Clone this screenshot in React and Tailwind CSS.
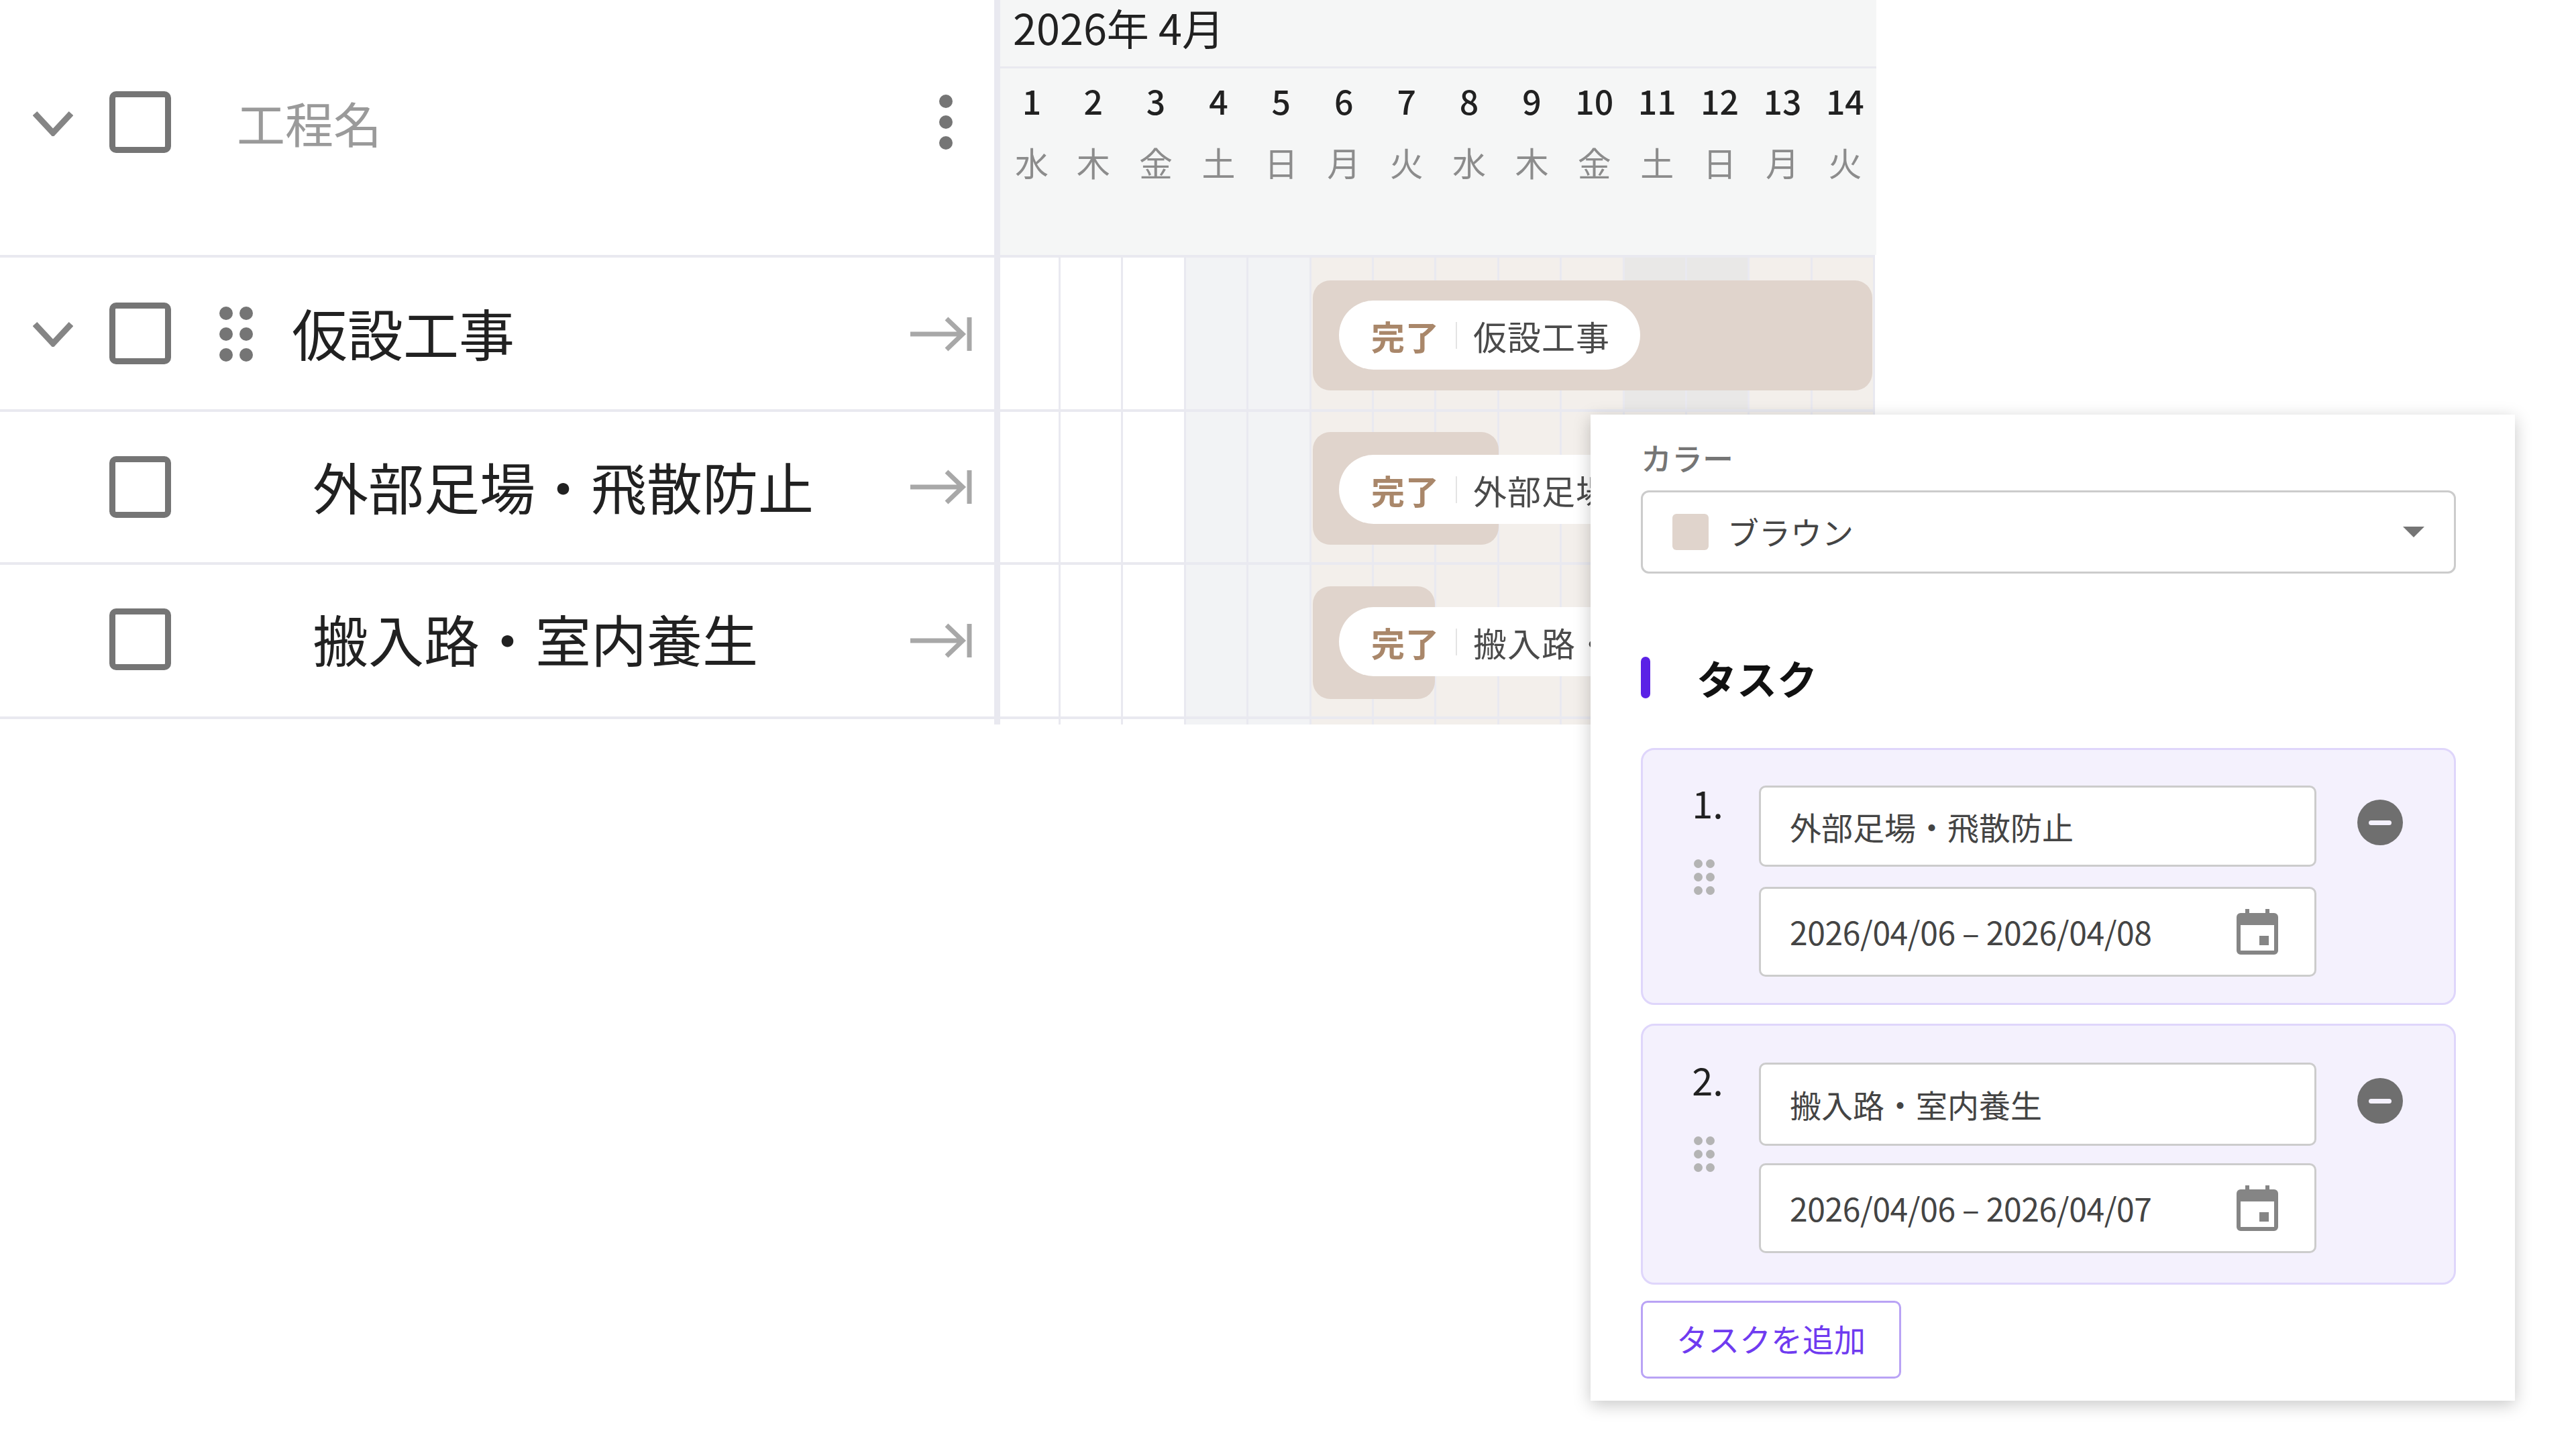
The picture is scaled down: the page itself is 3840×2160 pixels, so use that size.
const FONT = "font-['Noto_Sans_CJK_JP','Noto_Sans',sans-serif]";

const days = [
  [1, '水'], [2, '木'], [3, '金'], [4, '土'], [5, '日'], [6, '月'], [7, '火'],
  [8, '水'], [9, '木'], [10, '金'], [11, '土'], [12, '日'], [13, '月'], [14, '火'],
];

function Checkbox({ className = '' }) {
  return <div className={`w-[92px] h-[92px] border-[9px] border-[#757575] rounded-[10px] bg-white shrink-0 ${className}`} />;
}

function Chevron() {
  return (
    <svg viewBox="0 0 60 38" className="w-[60px] h-[38px]" fill="none" stroke="#858585" strokeWidth="9">
      <path d="M3 4 L30 33 L57 4" />
    </svg>
  );
}

function Dots({ size }) {
  const cls = size === 'lg' ? 'w-[20px] h-[20px] bg-[#757575]' : 'w-[13px] h-[13px] bg-[#b4b4b4]';
  return (
    <div className={size === 'lg' ? 'grid grid-cols-2 gap-x-[10px] gap-y-[11px]' : 'grid grid-cols-2 gap-x-[5px] gap-y-[7px]'}>
      {[0, 1, 2, 3, 4, 5].map((i) => (
        <span key={i} className={`${cls} rounded-full`} />
      ))}
    </div>
  );
}

function JumpIcon({ className }) {
  return (
    <svg viewBox="0 0 92 54" className={`absolute left-[1357px] w-[92px] h-[54px] ${className}`} fill="none" stroke="#a8a8a8" strokeWidth="7">
      <path d="M0 27 H76 M54 4 L78 27 L54 50" />
      <path d="M88 2 V52" />
    </svg>
  );
}

function CalendarIcon() {
  return (
    <svg viewBox="0 0 62 68" className="w-[62px] h-[68px]" fill="#858585">
      <path d="M13 0h6v6h24V0h6v6h7a6 6 0 0 1 6 6v50a6 6 0 0 1-6 6H6a6 6 0 0 1-6-6V12a6 6 0 0 1 6-6h7zM6 24v38h50V24z" />
      <rect x="34" y="40" width="14" height="14" />
    </svg>
  );
}

function MinusIcon() {
  return (
    <div className="w-[68px] h-[68px] rounded-full bg-[#6f6f6f] flex items-center justify-center">
      <span className="w-[34px] h-[7px] rounded-full bg-[#f4f1fd]" />
    </div>
  );
}

function LeftCell({ children }) {
  return (
    <div className="w-[1482px] shrink-0 flex items-center relative">
      {children}
    </div>
  );
}

function cellColor(i, tint) {
  if (i < 3) return 'bg-white';
  if (i < 5) return 'bg-[#f2f3f5]';
  if (tint && (i === 10 || i === 11)) return 'bg-[#e9e8e7]';
  return 'bg-[#f3efeb]';
}

function GanttRow({ barWidth, barTop, barHeight, pillTop, label, tint }) {
  return (
    <div className="relative flex-1 h-full">
      <div className="grid grid-cols-[90px_repeat(13,93.4px)] h-full">
        {days.map(([d], i) => (
          <div key={d} className={`h-full border-r-[3px] border-[#e9e9f0] ${cellColor(i, tint)}`} />
        ))}
      </div>
      {barWidth ? (
        <>
          <div
            className="absolute left-[466px] bg-[#e0d4cc] rounded-[26px]"
            style={{ width: barWidth, top: barTop, height: barHeight }}
          />
          <div
            className="absolute left-[505px] h-[103px] w-[449px] rounded-full bg-white flex items-center pl-[48px] whitespace-nowrap overflow-hidden"
            style={{ top: pillTop }}
          >
            <span className="text-[50px] leading-none font-bold text-[#a9876a] tracking-[1px]">完了</span>
            <span className="w-[2px] h-[40px] bg-[#e4e4e4] mx-[24px] shrink-0" />
            <span className="text-[50px] leading-none text-[#4a4a4a] tracking-[1px]">{label}</span>
          </div>
        </>
      ) : null}
    </div>
  );
}

function TaskCard({ n, name, range, cardH, inH1, inH2, gap, top, minusTop, dotsTop, mt }) {
  return (
    <div
      className={`relative border-[3px] border-[#dfd6fb] bg-[#f4f1fd] rounded-[20px] flex ${mt}`}
      style={{ height: cardH, paddingTop: top }}
    >
      <div className="w-[173px] shrink-0 flex flex-col items-center pl-[10px]">
        <span className="text-[56px] leading-[64px] text-[#212121] pl-[10px] mt-[-7px]">{n}.</span>
        <div style={{ marginTop: dotsTop }}>
          <Dots size="sm" />
        </div>
      </div>
      <div className="w-[831px] flex flex-col" style={{ gap }}>
        <div className="border-[3px] border-[#cccccc] rounded-[10px] bg-white flex items-center pl-[43px] pb-[1px] text-[47px] text-[#444] leading-none" style={{ height: inH1 }}>
          {name}
        </div>
        <div className="border-[3px] border-[#cccccc] rounded-[10px] bg-white flex items-center justify-between pl-[43px] pr-[54px] text-[48px] text-[#444] leading-none tracking-[-0.4px]" style={{ height: inH2 }}>
          <span className="pb-[2px]">{range}</span>
          <CalendarIcon />
        </div>
      </div>
      <div className="ml-[61px]" style={{ marginTop: minusTop }}>
        <MinusIcon />
      </div>
    </div>
  );
}

export default function App() {
  return (
    <div className={`relative w-[3840px] h-[2160px] bg-white overflow-hidden ${FONT}`}>
      <div className="w-[2795px]">
        {/* Header */}
        <div className="flex h-[384px] border-b-[4px] border-[#e9e9f0]">
          <LeftCell>
            <div className="w-[163px] flex justify-center pr-[6px] mt-[-12px]">
              <Chevron />
            </div>
            <Checkbox className="mt-[-16px]" />
            <span className="ml-[98px] text-[72px] leading-none text-[#9a9a9a] mt-[-16px]">工程名</span>
            <div className="absolute left-[1400px] top-[141px] flex flex-col gap-[11px]">
              <span className="w-[20px] h-[20px] rounded-full bg-[#757575]" />
              <span className="w-[20px] h-[20px] rounded-full bg-[#757575]" />
              <span className="w-[20px] h-[20px] rounded-full bg-[#757575]" />
            </div>
          </LeftCell>
          <div className="flex-1 bg-[#f5f6f6] border-l-[9px] border-[#e9e9f0] flex flex-col">
            <div className="h-[102px] border-b-[3px] border-[#e9e9f0] flex items-center pl-[19px] pb-[20px] text-[63px] leading-none text-[#212121]">
              2026年 4月
            </div>
            <div className="grid grid-cols-[90px_repeat(13,93.4px)] pt-[18px] pl-[2px]">
              {days.map(([d, w]) => (
                <div key={d} className="flex flex-col items-center">
                  <span className="text-[50px] leading-[58px] font-medium text-[#212121]">{d}</span>
                  <span className="text-[50px] leading-[58px] mt-[34px] text-[#8c8c8c]">{w}</span>
                </div>
              ))}
            </div>
          </div>
        </div>

        {/* Rows */}
        <div className="flex h-[230px] border-b-[4px] border-[#e9e9f0]">
          <LeftCell>
            <div className="w-[163px] flex justify-center pr-[6px] pt-[2px]"><Chevron /></div>
            <Checkbox />
            <div className="ml-[72px] pt-[2px]"><Dots size="lg" /></div>
            <span className="ml-[58px] pb-[3px] text-[83px] leading-none text-[#212121]">仮設工事</span>
            <JumpIcon className="top-[87px]" />
          </LeftCell>
          <div className="flex-1 h-full border-l-[9px] border-[#e9e9f0]">
            <GanttRow barWidth={834} barTop={34} barHeight={164} pillTop={64} label="仮設工事" tint />
          </div>
        </div>
        <div className="flex h-[228px] border-b-[4px] border-[#e9e9f0]">
          <LeftCell>
            <div className="w-[163px]" />
            <Checkbox />
            <span className="ml-[211px] pb-[4px] text-[83px] leading-none text-[#212121] whitespace-nowrap">外部足場・飛散防止</span>
            <JumpIcon className="top-[85px]" />
          </LeftCell>
          <div className="flex-1 h-full border-l-[9px] border-[#e9e9f0]">
            <GanttRow barWidth={277} barTop={30} barHeight={168} pillTop={64} label="外部足場・飛散防止" />
          </div>
        </div>
        <div className="flex h-[230px] border-b-[4px] border-[#e9e9f0]">
          <LeftCell>
            <div className="w-[163px]" />
            <Checkbox className="mt-[-4px]" />
            <span className="ml-[211px] pb-[8px] text-[83px] leading-none text-[#212121] whitespace-nowrap">搬入路・室内養生</span>
            <JumpIcon className="top-[86px]" />
          </LeftCell>
          <div className="flex-1 h-full border-l-[9px] border-[#e9e9f0]">
            <GanttRow barWidth={182} barTop={32} barHeight={168} pillTop={63} label="搬入路・室内養生" />
          </div>
        </div>
        <div className="flex h-[8px]">
          <LeftCell />
          <div className="flex-1 h-full border-l-[9px] border-[#e9e9f0]">
            <GanttRow />
          </div>
        </div>
      </div>

      {/* Popover */}
      <div className="absolute left-[2371px] top-[618px] w-[1378px] h-[1470px] bg-white shadow-[0_6px_24px_rgba(0,0,0,0.22)] pl-[75px] pt-[40px]">
        <div className="w-[1215px]">
          <div className="text-[46px] leading-[46px] font-medium text-[#757575]">カラー</div>
          <div className="mt-[27px] h-[124px] border-[3px] border-[#cccccc] rounded-[12px] flex items-center pl-[44px] pr-[44px]">
            <span className="w-[54px] h-[54px] rounded-[6px] bg-[#e0d4cc]" />
            <span className="ml-[28px] pb-[3px] text-[47px] leading-none text-[#444]">ブラウン</span>
            <svg viewBox="0 0 32 16" className="ml-auto w-[32px] h-[16px]" fill="#757575"><path d="M0 0h32L16 16z" /></svg>
          </div>
          <div className="mt-[124px] flex items-center h-[62px]">
            <span className="w-[14px] h-[62px] rounded-full bg-[#5b21e6]" />
            <span className="ml-[69px] text-[60px] leading-none font-bold text-[#111]">タスク</span>
          </div>
          <TaskCard n={1} name="外部足場・飛散防止" range="2026/04/06 – 2026/04/08" cardH={383} inH1={121} inH2={134} gap={30} top={53} minusTop={21} dotsTop={53} mt="mt-[74px]" />
          <TaskCard n={2} name="搬入路・室内養生" range="2026/04/06 – 2026/04/07" cardH={389} inH1={124} inH2={134} gap={26} top={55} minusTop={23} dotsTop={53} mt="mt-[28px]" />
          <button className="mt-[24px] w-[388px] h-[116px] border-[3px] border-[#b9a3f5] rounded-[10px] bg-white text-[47px] leading-none text-[#6f3bf0] block pb-[5px]">
            タスクを追加
          </button>
        </div>
      </div>
    </div>
  );
}
